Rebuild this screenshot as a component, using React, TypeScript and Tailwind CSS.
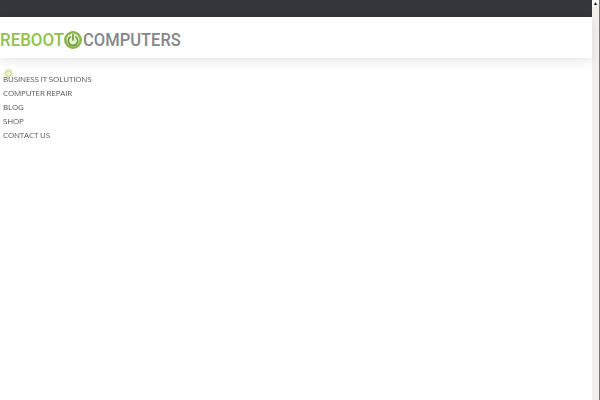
import React from "react";

const links = ["Business IT Solutions", "Computer Repair", "Blog", "Shop", "Contact Us"];

const PowerIcon = () => (
  <svg width="18" height="18" viewBox="0 0 19 19" className="shrink-0">
    <circle cx="9.5" cy="9.5" r="9.5" fill="#8db652" />
    <circle cx="9.5" cy="9.5" r="6.8" fill="#e6f0d6" />
    <path d="M6.6 6.2a5 5 0 1 0 5.8 0" fill="none" stroke="#6f9e3a" strokeWidth="1.8" strokeLinecap="round" />
    <path d="M9.5 4v5.5" fill="none" stroke="#6f9e3a" strokeWidth="1.8" strokeLinecap="round" />
  </svg>
);

const App: React.FC = () => {
  return (
    <div className="flex h-[400px] w-[600px] overflow-hidden bg-white font-['Open_Sans',sans-serif]">
      <div className="relative min-w-0 flex-1">
        <div className="h-[17px] bg-[#33373b]" />
        <header className="flex h-[41px] items-center bg-white pt-[4px] shadow-[0_4px_10px_rgba(0,0,0,0.09)]">
          <span className="w-[64px] origin-left scale-x-[0.89] whitespace-nowrap font-['Roboto',sans-serif] text-[19px] font-medium leading-none text-[#93c04f]">
            REBOOT
          </span>
          <PowerIcon />
          <span className="ml-[1px] w-[98px] origin-left scale-x-[0.87] whitespace-nowrap font-['Roboto',sans-serif] text-[19px] font-medium leading-none text-[#85878a]">
            COMPUTERS
          </span>
        </header>

        {/* small icon that sits over the first link */}
        <svg width="11" height="11" viewBox="0 0 11 11" className="absolute left-[3px] top-[68px]">
          <circle cx="5.5" cy="5.5" r="5.2" fill="#eef3d6" />
          <circle cx="5.5" cy="5.5" r="2.8" fill="none" stroke="#c3d48e" strokeWidth="1" />
        </svg>

        <nav className="relative flex flex-col pl-[3px] pt-[14px] will-change-transform">
          {links.map((link) => (
            <a
              key={link}
              href="#"
              className="h-[14px] text-[8px] uppercase leading-[14px] tracking-[-0.15px] text-[#555555]"
            >
              {link}
            </a>
          ))}
        </nav>
      </div>

      <div className="flex w-[8px] shrink-0 flex-col border-r border-[#777777] bg-[#f2efec]">
        <div className="flex h-[7px] items-center justify-center bg-white text-[5px] leading-none text-black">▲</div>
      </div>
    </div>
  );
};

export default App;
